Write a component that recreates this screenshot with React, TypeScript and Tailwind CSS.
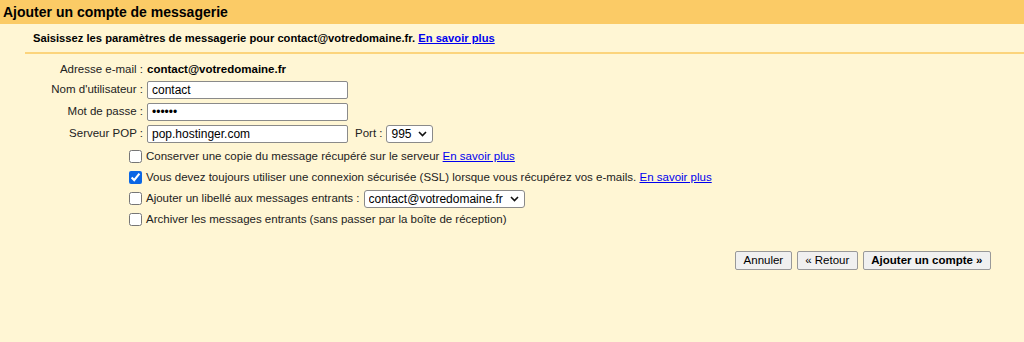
import React from 'react';

const Chevron = () => (
  <svg
    width="9"
    height="6"
    viewBox="0 0 9 6"
    className="pointer-events-none absolute right-[6px] top-1/2 -translate-y-1/2"
  >
    <path d="M1 1l3.5 3.5L8 1" fill="none" stroke="#111" strokeWidth="1.6" />
  </svg>
);

const Select = ({ value, className }: { value: string; className: string }) => (
  <div className={`relative h-[18px] ${className}`}>
    <select
      defaultValue={value}
      className="h-full w-full appearance-none rounded-[3px] border border-[#8a8a8a] bg-white pl-[4px] text-[12px] leading-none text-black outline-none"
    >
      <option>{value}</option>
    </select>
    <Chevron />
  </div>
);

const Link = ({ children }: { children: React.ReactNode }) => (
  <a href="#" className="text-[#0000ee] underline">
    {children}
  </a>
);

const Field = ({ label, children }: { label: string; children: React.ReactNode }) => (
  <div className="flex h-[22px] items-center">
    <div className="w-[143px] shrink-0 text-right">{label}</div>
    <div className="ml-[4px] flex items-center">{children}</div>
  </div>
);

const TextInput = ({ value, type = 'text' }: { value: string; type?: string }) => (
  <input
    type={type}
    defaultValue={value}
    readOnly
    className="h-[18px] w-[201px] rounded-[2px] border border-[#8a8a8a] bg-white px-[4px] text-[12px] text-black outline-none"
  />
);

const Check = ({ checked = false, children }: { checked?: boolean; children: React.ReactNode }) => (
  <div className="flex h-[21px] items-center">
    <input
      type="checkbox"
      defaultChecked={checked}
      className="ml-[129px] mr-[4px] h-[13px] w-[13px] accent-[#0b66e4]"
    />
    <div className="flex items-center">{children}</div>
  </div>
);

const Button = ({ children, bold = false }: { children: React.ReactNode; bold?: boolean }) => (
  <button
    className={`h-[19px] rounded-[2px] border border-[#999] bg-[#f0f0f0] px-[7.5px] text-[11.5px] leading-none text-black ${
      bold ? 'font-bold' : ''
    }`}
  >
    {children}
  </button>
);

export default function App() {
  return (
    <div className="min-h-[342px] bg-[#fff6d4] font-['Liberation_Sans',Arial,sans-serif] text-[11.5px] text-[#222]">
      {/* Title bar */}
      <div className="h-6 bg-[#fbcb66] pl-[3px] text-[14px] font-bold leading-6 text-black">
        Ajouter un compte de messagerie
      </div>

      {/* Intro line */}
      <div className="ml-[25px] flex h-[30px] items-center border-b-2 border-[#fcd47c] pl-2 text-[11.2px] font-bold text-black">
        Saisissez les paramètres de messagerie pour contact@votredomaine.fr.&nbsp;
        <Link>En savoir plus</Link>
      </div>

      {/* Form */}
      <div className="mt-[7px] flex h-[18px] items-center">
        <div className="w-[143px] shrink-0 text-right">Adresse e-mail :</div>
        <div className="ml-[4px] font-bold text-black">contact@votredomaine.fr</div>
      </div>
      <Field label="Nom d'utilisateur :">
        <TextInput value="contact" />
      </Field>
      <Field label="Mot de passe :">
        <TextInput value="secret" type="password" />
      </Field>
      <Field label="Serveur POP :">
        <TextInput value="pop.hostinger.com" />
        <span className="ml-[7px]">Port :</span>
        <Select value="995" className="ml-[4px] w-[47px]" />
      </Field>

      <div className="mt-[1px]">
        <Check>
          Conserver une copie du message récupéré sur le serveur&nbsp;<Link>En savoir plus</Link>
        </Check>
        <Check checked>
          Vous devez toujours utiliser une connexion sécurisée (SSL) lorsque vous récupérez vos e-mails.&nbsp;
          <Link>En savoir plus</Link>
        </Check>
        <Check>
          Ajouter un libellé aux messages entrants :
          <Select value="contact@votredomaine.fr" className="ml-[4px] w-[161px]" />
        </Check>
        <Check>Archiver les messages entrants (sans passer par la boîte de réception)</Check>
      </div>

      {/* Actions */}
      <div className="mt-[21px] flex justify-end gap-[5px] pr-[33px]">
        <Button>Annuler</Button>
        <Button>« Retour</Button>
        <Button bold>Ajouter un compte »</Button>
      </div>
    </div>
  );
}
